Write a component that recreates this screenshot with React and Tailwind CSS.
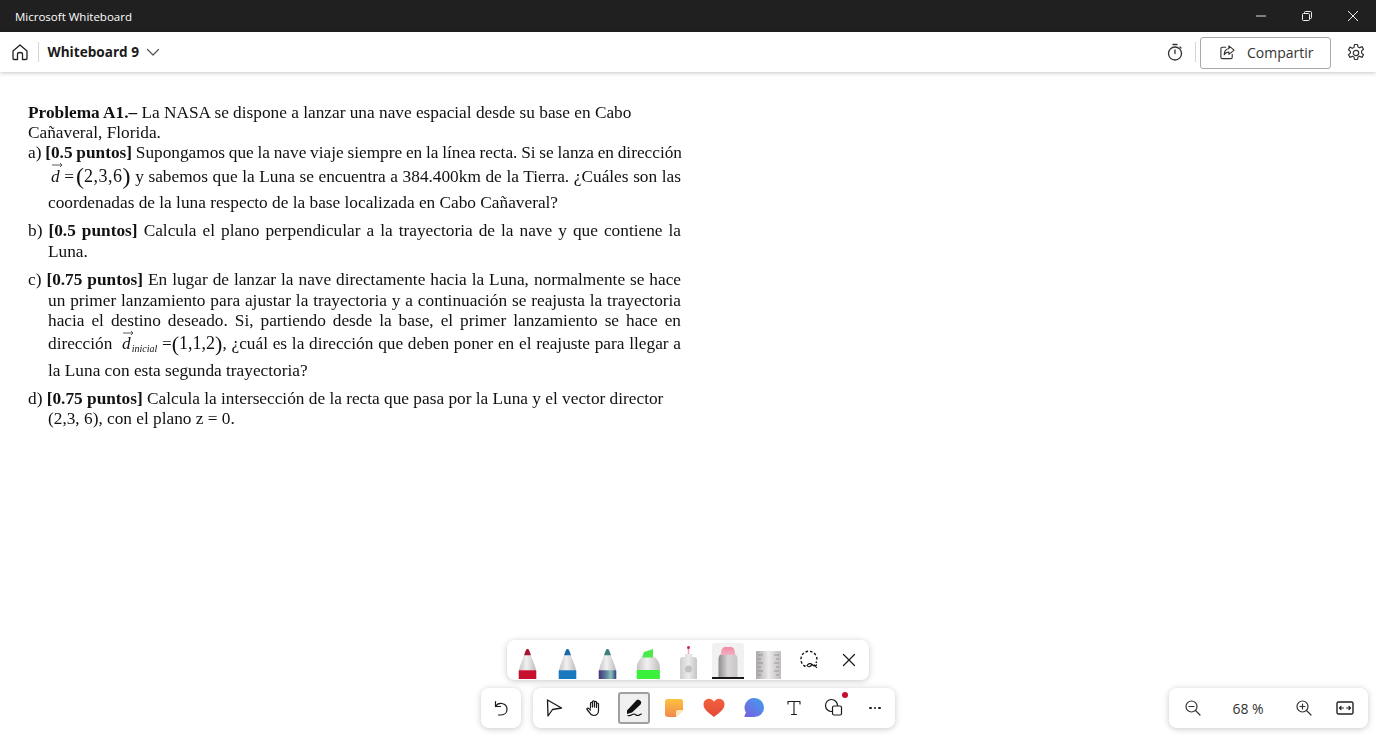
import React from "react";

const S = ({ w = 20, h = 20, vb = "0 0 20 20", children, className = "" }) => (
  <svg width={w} height={h} viewBox={vb} fill="none" stroke="currentColor" strokeWidth="1.2" strokeLinecap="round" strokeLinejoin="round" className={className}>{children}</svg>
);

const Line = ({ children, h = 20, mt = 0, pl = 0, just = false, w = 633 }) => (
  <div
    style={{ height: h, marginTop: mt, marginLeft: pl, width: just ? w - pl : undefined, lineHeight: h + "px" }}
    className={just ? "whitespace-nowrap text-justify [text-align-last:justify]" : "whitespace-nowrap"}
  >
    {children}
  </div>
);

const Vec = ({ sub }) => (
  <span className="relative inline-block italic">
    <span className="absolute left-[1px] top-[-2px] h-[6px] w-[11px]">
      <svg width="11" height="6" viewBox="0 0 11 6" fill="none" stroke="#333" strokeWidth="0.8" className="block"><path d="M0 3h10M8 1l2 2-2 2" /></svg>
    </span>
    d{sub && <span className="ml-[1px] text-[10px] align-[-3px]">{sub}</span>}
  </span>
);

const Paren = ({ children }) => (
  <span className="ml-[2px] whitespace-nowrap"><span className="text-[24px] font-light align-[-2px]">(</span><span className="text-[18px] tracking-[0.500px]">{children}</span><span className="text-[24px] font-light align-[-2px]">)</span></span>
);

const ParenSmall = ({ children }) => (
  <span className="whitespace-nowrap"><span className="text-[22px] font-light align-[-2px]">(</span><span className="text-[18px]">{children}</span><span className="text-[22px] font-light align-[-2px]">)</span></span>
);

const bodyPath = "M9.500 1h1C12 1 14 8 16 13c1.500 4 3 7 3.500 11v8h-18v-8c.5-4 2-7 3.500-11C7 8 8.500 1 9.500 1z";

const Pen = ({ id, tip, band }) => (
  <svg width="21" height="31" viewBox="0 0 21 32" className="block">
    <defs>
      <linearGradient id={id} x1="0" x2="1" y1="0" y2="0">
        <stop offset="0" stopColor="#c6c4c4" /><stop offset="0.45" stopColor="#f2f0f0" /><stop offset="1" stopColor="#bcbaba" />
      </linearGradient>
    </defs>
    <path d={bodyPath} fill={`url(#${id})`} />
    <path d="M7 7.500C8 4 9 1 10 1h1c1 0 2 3 3 6.500z" fill={tip} />
    {band}
  </svg>
);

function PenRow() {
  return (
    <div className="absolute left-[507px] top-[640px] flex h-[40px] w-[362px] items-end rounded-lg bg-white pb-[1px] pl-[4px] shadow-[0_1px_6px_rgba(0,0,0,0.22)]">
      <div className="flex w-[32px] justify-center"><Pen id="p1" tip="#a8142e" band={<rect x="1.500" y="23" width="18" height="9" fill="#c8102e" />} /></div>
      <div className="ml-[8px] flex w-[32px] justify-center"><Pen id="p2" tip="#1c6aa6" band={<rect x="1.500" y="23" width="18" height="9" fill="#1878c0" />} /></div>
      <div className="ml-[8px] flex w-[32px] justify-center">
        <Pen id="p3" tip="#3f7f7c" band={<>
          <defs><linearGradient id="mix" x1="0" x2="1"><stop offset="0" stopColor="#4a2f80" /><stop offset="0.4" stopColor="#5a7f9a" /><stop offset="0.7" stopColor="#8ac0b8" /><stop offset="1" stopColor="#2f3f80" /></linearGradient></defs>
          <rect x="1.500" y="23" width="18" height="9" fill="url(#mix)" />
        </>} />
      </div>
      <div className="ml-[9px] flex w-[32px] justify-center">
        <svg width="25" height="30" viewBox="0 0 25 30" className="block">
          <defs><linearGradient id="hl" x1="0" x2="1"><stop offset="0" stopColor="#c6c4c4" /><stop offset="0.45" stopColor="#f2f0f0" /><stop offset="1" stopColor="#c0bebe" /></linearGradient></defs>
          <path d="M6 8C3 11 .8 14 .8 18v12h23V18c0-4-2-7-5-10z" fill="url(#hl)" />
          <path d="M6 8.500L8 3l9-3v8.500z" fill="#4de94a" />
          <rect x=".8" y="21" width="23" height="9" fill="#3bf03b" />
        </svg>
      </div>
      <div className="ml-[8px] flex w-[32px] justify-center">
        <svg width="21" height="34" viewBox="0 0 21 34" className="block">
          <defs><linearGradient id="sp" x1="0" x2="1"><stop offset="0" stopColor="#cfcdcd" /><stop offset="0.5" stopColor="#eceaea" /><stop offset="1" stopColor="#c6c4c4" /></linearGradient></defs>
          <path d="M2 34V15q0-3 3-3h2V9h7v3h2q3 0 3 3v19z" fill="url(#sp)" />
          <circle cx="10.500" cy="24" r="3.500" fill="#c2c0c0" />
          <path d="M10.500 2v7" stroke="#e8a8b8" strokeWidth="1.500" />
          <circle cx="10.500" cy="2.500" r="1.500" fill="#c8264e" />
        </svg>
      </div>
      <div className="relative ml-[8px] flex h-[36px] w-[32px] items-end justify-center rounded-t-[3px] border-b-2 border-[#1a1a1a] bg-[#f1f1f1]">
        <svg width="20" height="31" viewBox="0 0 20 31" className="block">
          <defs>
            <linearGradient id="er" x1="0" x2="1"><stop offset="0" stopColor="#8e8c8c" /><stop offset="0.5" stopColor="#d8d6d6" /><stop offset="1" stopColor="#c8c6c6" /></linearGradient>
            <linearGradient id="erp" x1="0" x2="0" y1="0" y2="1"><stop offset="0" stopColor="#f28aa4" /><stop offset="1" stopColor="#f2b0c0" /></linearGradient>
          </defs>
          <path d="M.5 31V13q0-4 3-5h13q3 1 3 5v18z" fill="url(#er)" />
          <path d="M3 9q0-8 4-8h6q4 0 4 8z" fill="url(#erp)" />
        </svg>
      </div>
      <div className="ml-[8px] flex w-[32px] justify-center">
        <svg width="25" height="29" viewBox="0 0 25 29" className="block">
          <defs><linearGradient id="ru" x1="0" x2="1"><stop offset="0" stopColor="#aaa8a8" /><stop offset="0.5" stopColor="#eceaea" /><stop offset="1" stopColor="#bebcbc" /></linearGradient></defs>
          <path d="M0 2q0-1 1-1h23q1 0 1 1v27H0z" fill="url(#ru)" />
          <path d="M2 5h5M2 9h3M2 13h5M2 17h3M2 21h5M2 25h3M23 5h-5M23 9h-3M23 13h-5M23 17h-3M23 21h-5M23 25h-3" stroke="#777" strokeWidth="0.6" />
        </svg>
      </div>
      <div className="ml-[9px] flex h-[39px] w-[32px] items-center justify-center text-[#111]">
        <S w={20} h={20}>
          <path d="M6.500 16.500A8 8 0 1 1 17 13" strokeDasharray="2.600 1.900" strokeLinecap="butt" strokeWidth="1.400" />
          <path d="M8 15.500c1.500-2 3.500-2.500 5-1s3 1.800 4.500.5M8 15.500c1.500 2 3.500 1.500 5-1M17.500 17.500L15.500 15" strokeWidth="1.200" />
        </S>
      </div>
      <div className="ml-[8px] flex h-[39px] w-[32px] items-center justify-center text-[#1a1a1a]">
        <S w={14} h={14} vb="0 0 14 14"><path d="M1.500 1.500l11 11M12.500 1.500l-11 11" /></S>
      </div>
    </div>
  );
}

function BottomBar() {
  return (
    <div className="absolute left-[533px] top-[688px] flex h-[40px] w-[362px] items-center rounded-lg bg-white pl-[5px] text-[#1a1a1a] shadow-[0_1px_6px_rgba(0,0,0,0.22)]">
      <div className="flex w-[32px] justify-center">
        <S w={20} h={20}><path d="M3.500 2L17.500 10 8.500 11.500 4 18z" strokeWidth="1.300" /></S>
      </div>
      <div className="ml-[8px] flex w-[32px] justify-center">
        <S w={18} h={18} vb="0 0 18 18"><path d="M5.500 9V4.300a1 1 0 0 1 2 0V8M7.500 8V2.800a1 1 0 0 1 2 0V8M9.500 8V3.300a1 1 0 0 1 2 0V8.500M11.500 8.500V5a1 1 0 0 1 2 0v6.500c0 3-2 5-4.500 5-2.500 0-3.500-1.200-4.500-3L2 10.500c-.7-1.200.8-2 1.800-1L5.500 11" /></S>
      </div>
      <div className="ml-[8px] flex h-[32px] w-[32px] items-center justify-center rounded-[3px] border-2 border-[#a0a0a0] bg-[#f0f0f0]">
        <svg width="20" height="20" viewBox="0 0 20 20" fill="none">
          <path d="M3 12.500L12.500 2.300c1-1 3.500-.3 4.300 1 .8 1.200.4 2.500-.5 3.500L8 14.500l-5 1.500z" fill="#111" />
          <path d="M4 17.500c3 1 4-1.500 6-1.500s1.500 1.500 3.500 1.500 2.500-1.500 4-1.500" stroke="#111" strokeWidth="1.200" strokeLinecap="round" />
        </svg>
      </div>
      <div className="ml-[8px] flex w-[32px] justify-center">
        <svg width="20" height="20" viewBox="0 0 20 20">
          <defs><linearGradient id="note" x1="0" y1="0" x2="0" y2="1"><stop offset="0" stopColor="#fdc23e" /><stop offset="1" stopColor="#f0894f" /></linearGradient></defs>
          <path d="M4 1h12.500q2.500 0 2.500 2.500V12l-7 7H4q-3 0-3-3V4q0-3 3-3z" fill="url(#note)" />
          <path d="M12 19v-5q0-2 2-2h5z" fill="#fbe9b8" />
        </svg>
      </div>
      <div className="ml-[8px] flex w-[32px] justify-center">
        <svg width="22" height="20" viewBox="0 0 22 20">
          <defs><linearGradient id="heart" x1="0" y1="0" x2="0" y2="1"><stop offset="0" stopColor="#f2603f" /><stop offset="1" stopColor="#e44a36" /></linearGradient></defs>
          <path d="M11 19C5 14.500.5 11 .5 6.500.5 3 3 .8 6 .8c2 0 3.800 1 5 3 1.200-2 3-3 5-3 3 0 5.500 2.200 5.500 5.700C21.500 11 17 14.500 11 19z" fill="url(#heart)" />
        </svg>
      </div>
      <div className="ml-[8px] flex w-[32px] justify-center">
        <svg width="22" height="22" viewBox="0 0 22 22">
          <defs><linearGradient id="bub" x1="0" y1="1" x2="1" y2="0"><stop offset="0" stopColor="#7a5fe0" /><stop offset="1" stopColor="#3fa0ee" /></linearGradient></defs>
          <path d="M11.500 1a9.500 9.500 0 0 1 0 19H2.500a1 1 0 0 1-.9-1.400L3 15.500A9.500 9.500 0 0 1 11.500 1z" fill="url(#bub)" />
        </svg>
      </div>
      <div className="ml-[8px] flex w-[32px] justify-center">
        <S w={18} h={18} vb="0 0 18 18"><path d="M3 5V2.500h12V5M9 2.500v13M6.500 15.500h5" strokeWidth="1.100" /></S>
      </div>
      <div className="relative ml-[8px] flex w-[32px] justify-center">
        <S w={20} h={20}>
          <path d="M8.500 13.500H8A6 6 0 1 1 13.500 7.500" />
          <rect x="8.500" y="8" width="9" height="9" rx="1.500" />
        </S>
        <span className="absolute right-[2px] top-[-6px] h-[6px] w-[6px] rounded-full bg-[#c50f2e]" />
      </div>
      <div className="ml-[8px] flex w-[32px] justify-center gap-[2px] pl-[2px]">
        <span className="h-[2.500px] w-[2.500px] rounded-full bg-[#1a1a1a]" />
        <span className="h-[2.500px] w-[2.500px] rounded-full bg-[#1a1a1a]" />
        <span className="h-[2.500px] w-[2.500px] rounded-full bg-[#1a1a1a]" />
      </div>
    </div>
  );
}

export default function App() {
  return (
    <div className="relative flex h-[736px] w-[1376px] flex-col overflow-hidden bg-white font-['Open_Sans','Noto_Sans',sans-serif] text-[#1a1a1a]">
      <div className="flex h-[32px] shrink-0 items-center justify-between bg-[#202020] pl-[15px] text-white">
        <span className="pt-[2px] text-[11.500px]">Microsoft Whiteboard</span>
        <div className="flex h-full items-center">
          <div className="flex w-[46px] justify-center pr-[1px]"><svg width="10" height="2" viewBox="0 0 10 2"><path d="M0 1h10" stroke="#ddd" /></svg></div>
          <div className="flex w-[46px] justify-center"><svg width="10" height="10" viewBox="0 0 10 10" fill="none" stroke="#eee"><rect x=".5" y="2.500" width="7" height="7" rx="1" /><path d="M2.500 2.500V1.500q0-1 1-1h5q1 0 1 1v5q0 1-1 1h-1" /></svg></div>
          <div className="flex w-[46px] justify-center"><svg width="12" height="12" viewBox="0 0 12 12" stroke="#eee"><path d="M1 1l10 10M11 1L1 11" /></svg></div>
        </div>
      </div>

      <div className="z-10 flex h-[40px] shrink-0 items-center bg-white pl-[11px] pr-[10px] shadow-[0_1px_4px_rgba(0,0,0,0.22)]">
        <S w={18} h={18} vb="0 0 18 18" className="text-[#222]"><path d="M2 8l7-6 7 6v7.500q0 1-1 1h-3.500V11q0-1.500-2.500-1.500T6.500 11v5.500H3q-1 0-1-1z" strokeWidth="1.300" /></S>
        <div className="ml-[9px] h-[20px] w-px bg-[#d5d5d5]" />
        <span className="ml-[8.500px] pt-[1px] text-[13.600px] font-bold">Whiteboard 9</span>
        <S w={14} h={14} vb="0 0 14 14" className="ml-[7px] text-[#555]"><path d="M1.500 4.500L7 10l5.500-5.500" /></S>
        <div className="flex-1" />
        <S w={18} h={18} vb="0 0 18 18" className="text-[#333]"><circle cx="9" cy="10.500" r="6.500" strokeWidth="1.300" /><path d="M9 7v3.500M7 1.500h4M14 4l1 1" strokeWidth="1.300" /></S>
        <div className="ml-[11px] h-[20px] w-px bg-[#d5d5d5]" />
        <div className="ml-[4px] mt-[1px] flex h-[32px] w-[131px] items-center rounded-[3px] border border-[#a9a9a9] pl-[18px]">
          <S w={17} h={17} vb="0 0 18 18" className="text-[#333]"><path d="M7 3.500H3.500Q2 3.500 2 5v9q0 1.500 1.500 1.500h9q1.500 0 1.500-1.500v-3" /><path d="M10.500 2l5.500 4.500-5.500 4.500V8.500c-2.500 0-4 1-5 3 0-4 2-6.500 5-6.500z" /></S>
          <span className="ml-[11px] text-[14px] text-[#333]">Compartir</span>
        </div>
        <S w={20} h={20} className="ml-[15px] mt-[1px] text-[#333]"><path d="M8.500 1.500h3l.5 2.500 1.700.8 2.300-1.200 1.500 2.600-1.900 1.700v2.200l1.900 1.700-1.500 2.600-2.300-1.200-1.700.8-.5 2.500h-3l-.5-2.500-1.700-.8-2.300 1.200-1.500-2.600 1.900-1.700V8.400L2.500 6.700 4 4.100l2.300 1.200L8 4.500z" /><circle cx="10" cy="10" r="2.700" /></S>
      </div>

      <div className="relative flex-1 bg-white">
        <div className="pl-[28px] pt-[31px] font-['Liberation_Serif',serif] text-[17.300px] text-[#111] [filter:blur(0.3px)]">
          <Line><b>Problema A1.–</b> La NASA se dispone a lanzar una nave espacial desde su base en Cabo</Line>
          <Line>Cañaveral, Florida.</Line>
          <Line just w={654}><span className="[word-spacing:-0.900px]">a) <b>[0.5 puntos]</b> Supongamos que la nave viaje siempre en la línea recta. Si se lanza en dirección</span></Line>
          <Line h={26} pl={20} just w={653}><span className="pl-[3px]"><Vec /></span> =<Paren>2,3,6</Paren> y sabemos que la Luna se encuentra a 384.400km de la Tierra. ¿Cuáles son las</Line>
          <Line h={24} mt={2} pl={20}>coordenadas de la luna respecto de la base localizada en Cabo Cañaveral?</Line>
          <Line mt={6} just w={653}>b) <b>[0.5 puntos]</b> Calcula el plano perpendicular a la trayectoria de la nave y que contiene la</Line>
          <Line mt={1} pl={20}>Luna.</Line>
          <Line mt={8} just w={653}>c) <b>[0.75 puntos]</b> En lugar de lanzar la nave directamente hacia la Luna, normalmente se hace</Line>
          <Line mt={1} pl={20} just w={653}>un primer lanzamiento para ajustar la trayectoria y a continuación se reajusta la trayectoria</Line>
          <Line pl={20} just w={653}>hacia el destino deseado. Si, partiendo desde la base, el primer lanzamiento se hace en</Line>
          <Line h={24} pl={20} just w={653}>dirección <span className="ml-[5px]"><Vec sub="inicial" /></span> =<ParenSmall>1,1,2</ParenSmall>, ¿cuál es la dirección que deben poner en el reajuste para llegar a</Line>
          <Line h={26} mt={3} pl={20}>la Luna con esta segunda trayectoria?</Line>
          <Line mt={5}>d) <b>[0.75 puntos]</b> Calcula la intersección de la recta que pasa por la Luna y el vector director</Line>
          <Line pl={20}>(2,3, 6), con el plano z = 0.</Line>
        </div>
      </div>

      <PenRow />

      <div className="absolute left-[481px] top-[688px] flex h-[40px] w-[40px] items-center justify-center rounded-lg bg-white text-[#1a1a1a] shadow-[0_1px_6px_rgba(0,0,0,0.22)]">
        <S w={18} h={18} vb="0 0 18 18"><path d="M3.500 2.500v5h5" /><path d="M3.500 7.500C5 5 7.500 4 10 4.500c3 .6 5 3 5 5.700 0 3.300-2.500 5.800-6 5.800H6.500" /></S>
      </div>

      <BottomBar />

      <div className="absolute left-[1169px] top-[688px] flex h-[40px] w-[199px] items-center rounded-lg bg-white pl-[14px] text-[#1a1a1a] shadow-[0_1px_6px_rgba(0,0,0,0.22)]">
        <S w={20} h={20} className="text-[#333]"><circle cx="8.500" cy="8.500" r="5.500" /><path d="M6 8.500h5M12.500 12.500l4.500 4.500" /></S>
        <span className="ml-[27px] w-[36px] text-center text-[14px] text-[#333]">68 %</span>
        <S w={20} h={20} className="ml-[28px] text-[#333]"><circle cx="8.500" cy="8.500" r="5.500" /><path d="M6 8.500h5M8.500 6v5M12.500 12.500l4.500 4.500" /></S>
        <S w={18} h={18} vb="0 0 18 18" className="ml-[22px] text-[#222]"><rect x="1" y="3" width="16" height="12" rx="1.500" strokeWidth="1.400" /><path d="M3.500 9h4M5 7.500L3.500 9 5 10.500M14.500 9h-4M13 7.500L14.500 9 13 10.500" /></S>
      </div>
    </div>
  );
}
